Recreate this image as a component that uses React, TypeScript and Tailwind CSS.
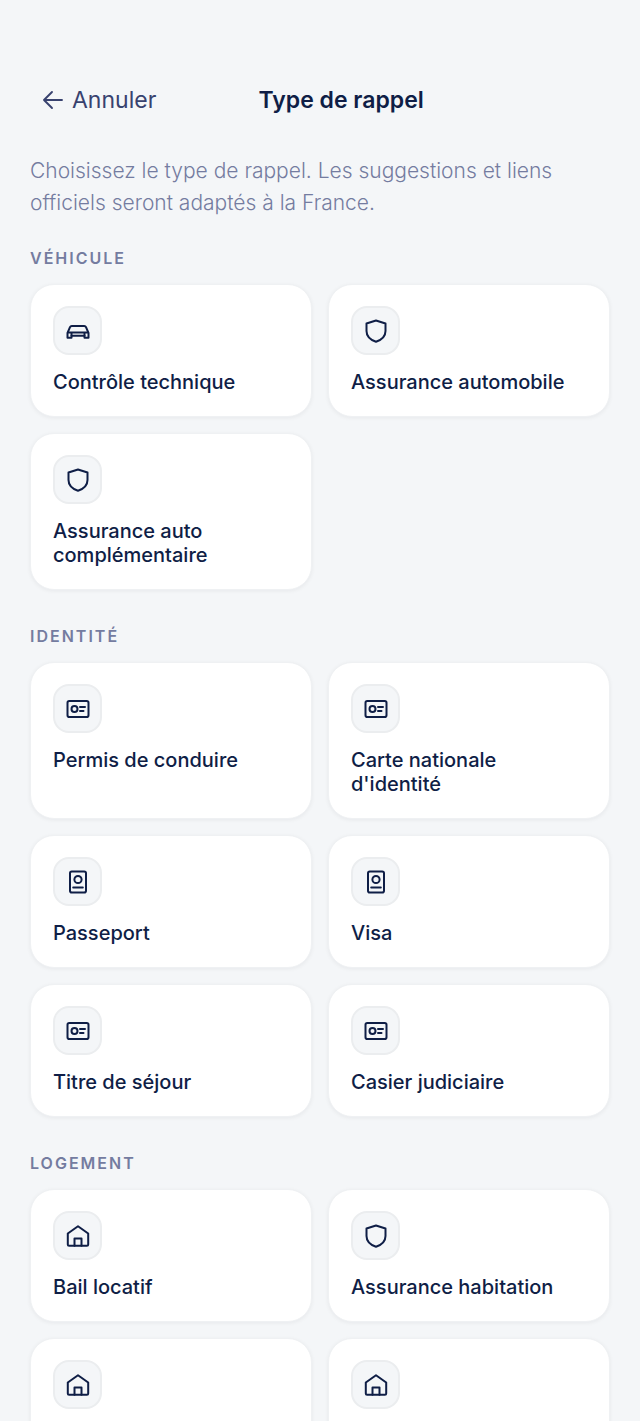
import type { ReactNode } from "react";

type IconName = "car" | "shield" | "card" | "passport" | "home";

type Reminder = { label: string; icon: IconName };

const sections: { title: string; items: Reminder[] }[] = [
  {
    title: "Véhicule",
    items: [
      { label: "Contrôle technique", icon: "car" },
      { label: "Assurance automobile", icon: "shield" },
      { label: "Assurance auto complémentaire", icon: "shield" },
    ],
  },
  {
    title: "Identité",
    items: [
      { label: "Permis de conduire", icon: "card" },
      { label: "Carte nationale d'identité", icon: "card" },
      { label: "Passeport", icon: "passport" },
      { label: "Visa", icon: "passport" },
      { label: "Titre de séjour", icon: "card" },
      { label: "Casier judiciaire", icon: "card" },
    ],
  },
  {
    title: "Logement",
    items: [
      { label: "Bail locatif", icon: "home" },
      { label: "Assurance habitation", icon: "shield" },
      { label: "Taxe foncière", icon: "home" },
      { label: "Taxe d'habitation", icon: "home" },
    ],
  },
];

const icons: Record<IconName, ReactNode> = {
  car: (
    <>
      <path d="M2.5 19.8V15L5 9.2Q5.5 8 6.8 8H19.2Q20.5 8 21 9.2L23.5 15V19.8H19.5V17.8H6.5V19.8Z" />
      <path d="M3.5 14.5H22.5M6.5 17.5V15M19.5 17.5V15" />
    </>
  ),
  shield: (
    <path d="M13 2.5L22.5 5.5V13C22.5 18.5 18.8 21.8 13 23.8C7.2 21.8 3.5 18.5 3.5 13V5.5Z" />
  ),
  card: (
    <>
      <rect x="2.5" y="5" width="21" height="16" rx="1.8" />
      <circle cx="9.5" cy="13" r="3" />
      <path d="M15 11H20M15 15H18.5" />
    </>
  ),
  passport: (
    <>
      <rect x="5" y="2.5" width="16" height="21" rx="1.8" />
      <circle cx="13" cy="10.5" r="3.6" />
      <path d="M8.2 18.5H17.8" />
    </>
  ),
  home: (
    <>
      <path d="M2.8 10.5L13 3.2L23.2 10.5V21.5Q23.2 22.8 21.9 22.8H4.1Q2.8 22.8 2.8 21.5Z" />
      <path d="M9.5 22.8V15.5H16.5V22.8" />
    </>
  ),
};

function ReminderCard({ label, icon }: Reminder) {
  return (
    <button
      type="button"
      className="flex flex-col items-start gap-[15px] rounded-3xl border border-[#eff1f3] bg-white px-[22px] pt-[21px] pb-[22px] text-left shadow-[0_1px_4px_rgba(16,24,40,0.06)]"
    >
      <span className="flex size-[49px] items-center justify-center rounded-2xl border-2 border-[#ebedef] bg-[#f4f6f8]">
        <svg
          viewBox="0 0 26 26"
          className="size-[26px]"
          fill="none"
          stroke="currentColor"
          strokeWidth="2"
          strokeLinecap="round"
          strokeLinejoin="round"
          aria-hidden="true"
        >
          {icons[icon]}
        </svg>
      </span>
      <span className="text-xl leading-6 font-medium">{label}</span>
    </button>
  );
}

export default function App() {
  return (
    <div className="flex h-screen flex-col bg-[#f4f6f8] font-['Inter','Liberation_Sans',sans-serif] text-[#0f1e46]">
      <header className="flex shrink-0 items-center justify-between px-[30px] pt-[84px]">
        <button
          type="button"
          className="flex items-center gap-2 px-3 text-[23px] leading-8 text-[#38426f]"
        >
          <svg
            viewBox="0 0 22 22"
            className="size-[22px]"
            fill="none"
            stroke="currentColor"
            strokeWidth="1.9"
            strokeLinecap="round"
            strokeLinejoin="round"
            aria-hidden="true"
          >
            <path d="M20 11H2M10 3L2 11L10 19" />
          </svg>
          Annuler
        </button>
        <h1 className="text-[23px] leading-8 font-semibold">Type de rappel</h1>
        {/* keeps the title near the middle */}
        <div className="w-24" />
      </header>

      <main className="min-h-0 flex-1 overflow-y-auto px-[30px] pt-[39px] pb-8 [scrollbar-width:none]">
        <p className="text-[21px] leading-8 font-light text-[#747ca0]">
          Choisissez le type de rappel. Les suggestions et liens officiels seront adaptés à la France.
        </p>

        <div className="mt-[27px] flex flex-col gap-[34px]">
          {sections.map(({ title, items }) => (
            <section key={title}>
              <h2 className="text-base leading-6 font-semibold tracking-[2px] text-[#747ca0] uppercase">
                {title}
              </h2>
              <div className="mt-3.5 grid grid-cols-2 gap-4">
                {items.map((item) => (
                  <ReminderCard key={item.label} {...item} />
                ))}
              </div>
            </section>
          ))}
        </div>
      </main>
    </div>
  );
}
